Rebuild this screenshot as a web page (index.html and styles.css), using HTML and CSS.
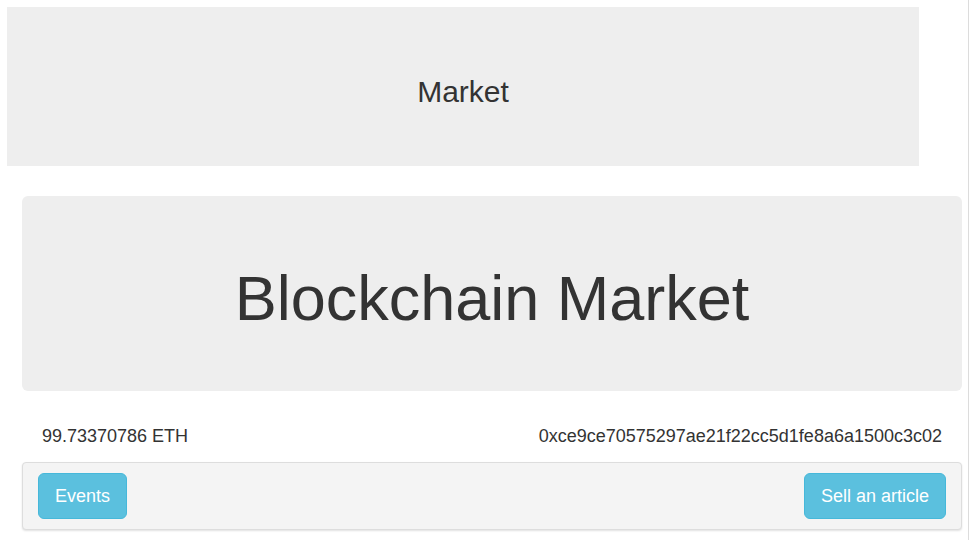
FILE: index.html
```html
<!DOCTYPE html>
<html lang="en">
<head>
<meta charset="utf-8">
<title>Market</title>
<link rel="stylesheet" href="styles.css">
</head>
<body>
<div class="page">
  <header class="top-header">
    <h2 class="top-title">Market</h2>
  </header>
  <main class="content">
    <section class="jumbotron">
      <h1 class="jumbo-title">Blockchain Market</h1>
    </section>
    <div class="account-row">
      <h4 class="account-text">99.73370786 ETH</h4>
      <h4 class="account-text">0xce9ce70575297ae21f22cc5d1fe8a6a1500c3c02</h4>
    </div>
    <div class="panel">
      <button class="btn" type="button">Events</button>
      <button class="btn" type="button">Sell an article</button>
    </div>
  </main>
</div>
</body>
</html>
```
FILE: styles.css
```css
html, body {
  margin: 0;
  padding: 0;
  background: #fff;
}
body {
  font-family: "Liberation Sans", Arial, Helvetica, sans-serif;
  font-size: 14px;
  color: #333;
}
.page {
  width: 969px;
  min-height: 540px;
  box-sizing: border-box;
  border-right: 1px solid #dcdcdc;
  padding-top: 7px;
}
.top-header {
  margin-left: 7px;
  width: 912px;
  background: #eee;
  padding: 48px 0;
  text-align: center;
}
.top-title {
  margin: 20px 0 10px;
  font-size: 30px;
  font-weight: 500;
  line-height: 1.1;
}
.content {
  margin-left: 22px;
  width: 940px;
}
.jumbotron {
  margin-top: 30px;
  background: #eee;
  border-radius: 6px;
  padding: 48px 60px;
  text-align: center;
}
.jumbo-title {
  margin: 20px 0 10px;
  font-size: 63px;
  font-weight: 500;
  line-height: 1.1;
}
.account-row {
  margin-top: 36px;
  padding: 0 20px;
  display: flex;
  justify-content: space-between;
}
.account-text {
  margin: 0;
  font-size: 18px;
  font-weight: 500;
  line-height: 1.1;
}
.panel {
  margin-top: 15px;
  background: #f4f4f4;
  border: 1px solid #ddd;
  border-radius: 4px;
  box-shadow: 0 1px 2px rgba(0, 0, 0, 0.12);
  padding: 10px 15px;
  display: flex;
  justify-content: space-between;
}
.btn {
  font-family: "Liberation Sans", Arial, Helvetica, sans-serif;
  font-size: 18px;
  line-height: 24px;
  padding: 10px 16px;
  color: #fff;
  background: #5bc0de;
  border: 1px solid #46b8da;
  border-radius: 6px;
  cursor: pointer;
}
```
